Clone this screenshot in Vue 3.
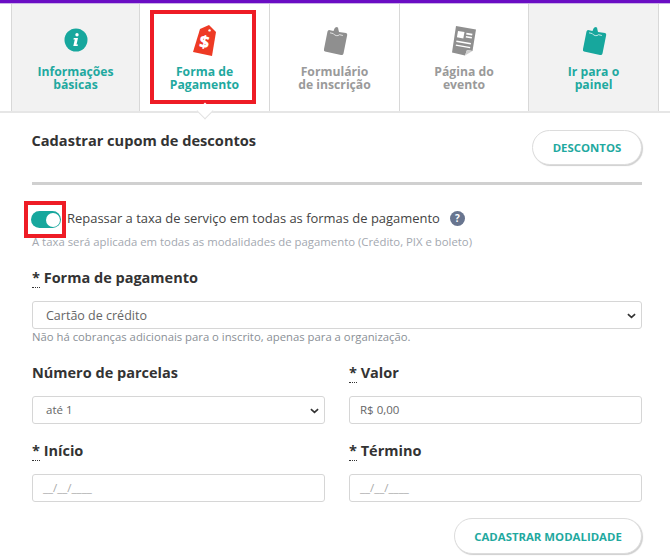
<script setup>
const tabs = [
  { id: 'info', lines: ['Informações', 'básicas'], tone: 'teal', bg: true },
  { id: 'tag', lines: ['Forma de', 'Pagamento'], tone: 'teal', marked: true },
  { id: 'clip', lines: ['Formulário', 'de inscrição'], tone: 'grey' },
  { id: 'page', lines: ['Página do', 'evento'], tone: 'grey' },
  { id: 'clip', lines: ['Ir para o', 'painel'], tone: 'teal', bg: true },
]
</script>

<template>
  <div class="page">
    <div class="topbar"></div>
    <nav class="tabs">
      <div v-for="(t, i) in tabs" :key="i" class="tab" :class="[t.tone, { shaded: t.bg, marked: t.marked }]">
        <svg class="icon" viewBox="0 0 34 34">
          <template v-if="t.id === 'info'">
            <circle cx="17" cy="17" r="11.5" fill="#17a79d" />
            <circle cx="18" cy="11.8" r="1.7" fill="#fff" />
            <path d="M14.8 15h4.2l-1.500 6.600h1.500l-.4 1.400h-4.300l1.500-6.600h-1.400z" fill="#fff" />
          </template>
          <template v-else-if="t.id === 'tag'">
            <path d="M21 2l7 7-4 24-19-4 7-23z" fill="#ee3a24" />
            <circle cx="21.500" cy="7.400" r="1.200" fill="#fff" />
            <text x="16.300" y="25" class="dollar" transform="rotate(10 16.300 20)">$</text>
          </template>
          <template v-else-if="t.id === 'clip'">
            <path d="M11 7l4.500 1 1-2.500L18 4l2 .5.500 2.500.5 2 7 1q1.500.3 1.200 2l-3.700 18.500q-.5 2-2.500 1.500l-16-3.500q-1.500-.5-1-2.500l3.500-17.500q.5-1.500 1.500-1.500z" fill="currentColor" />
            <path d="M12 9.800l3.300.8q1 1.600 2.900 2t3.400-.9l3.300.8" stroke="#fff" stroke-width=".9" fill="none" opacity=".8" />
          </template>
          <template v-else>
            <path d="M9 3l20 3.500L25.500 28l-5.500-1-2 5.500-13-3z" fill="#8f8f8f" />
            <path d="M11 8l6.500 1.100-1.200 6.300-6.400-1.100zM19.500 9.800l6 1-.4 1.700-6-1zM19 13l6 1-.3 1.500-6-1zM9.500 17.500l14.500 2.500-.3 1.500-14.500-2.500zM9 21.500l14.300 2.500-.3 1.300-14.300-2.500z" fill="#fff" />
            <path d="M20 27l5.500 1-7.500 4.500z" fill="#cfcfcf" />
          </template>
        </svg>
        <span class="tab-text">{{ t.lines[0] }}<br />{{ t.lines[1] }}</span>
      </div>
    </nav>
    <div class="rule"><span class="notch"></span></div>

    <main class="content">
      <header class="head">
        <h2>Cadastrar cupom de descontos</h2>
        <button class="pill discounts">DESCONTOS</button>
      </header>
      <hr class="divider" />

      <div class="toggle-row">
        <span class="toggle-wrap">
          <span class="switch"><span class="knob"></span></span>
        </span>
        <span class="toggle-label">Repassar a taxa de serviço em todas as formas de pagamento</span>
        <span class="help">?</span>
      </div>
      <p class="hint first">A taxa será aplicada em todas as modalidades de pagamento (Crédito, PIX e boleto)</p>

      <label class="label pay"><abbr>*</abbr> Forma de pagamento</label>
      <div class="field select wide">Cartão de crédito
        <svg class="chev" viewBox="0 0 10 6"><path d="M1 1l4 3.600L9 1" fill="none" stroke="#333" stroke-width="1.800" /></svg>
      </div>
      <p class="hint second">Não há cobranças adicionais para o inscrito, apenas para a organização.</p>

      <div class="grid">
        <div>
          <label class="label">Número de parcelas</label>
          <div class="field select">até 1
            <svg class="chev" viewBox="0 0 10 6"><path d="M1 1l4 3.600L9 1" fill="none" stroke="#333" stroke-width="1.800" /></svg>
          </div>
        </div>
        <div>
          <label class="label"><abbr>*</abbr> Valor</label>
          <div class="field">R$ 0,00</div>
        </div>
        <div>
          <label class="label"><abbr>*</abbr> Início</label>
          <div class="field mask">__/__/____</div>
        </div>
        <div>
          <label class="label"><abbr>*</abbr> Término</label>
          <div class="field mask">__/__/____</div>
        </div>
      </div>

      <div class="actions">
        <button class="pill register">CADASTRAR MODALIDADE</button>
      </div>
    </main>
  </div>
</template>

<style scoped>
.page {
  width: 670px;
  height: 557px;
  overflow: hidden;
  background: #fff;
  font-family: "Open Sans", sans-serif;
  color: #333;
  position: relative;
}
.topbar {
  height: 3px;
  background: #6a0dc4;
  border-bottom: 1px solid #c9b4e6;
}
.tabs {
  display: grid;
  grid-template-columns: 128px 130px 130px 129px 130px;
  margin-left: 11px;
  width: 648px;
  height: 107px;
  border-left: 1px solid #d8d8d8;
  box-sizing: border-box;
}
.tab {
  position: relative;
  border-right: 1px solid #d8d8d8;
  display: flex;
  flex-direction: column;
  align-items: center;
  padding-top: 19px;
  box-sizing: border-box;
}
.tab.shaded { background: #f2f2f2; }
.icon { width: 34px; height: 34px; display: block; }
.tab.grey .icon { color: #8f8f8f; }
.tab.teal .icon { color: #17a79d; }
.tab-text {
  margin-top: 8px;
  font-size: 12.200px;
  line-height: 13px;
  font-weight: 700;
  text-align: center;
}
.tab.teal .tab-text { color: #1fa9a0; }
.tab.grey .tab-text { color: #9a9a9a; }
.tab.marked::after {
  content: "";
  position: absolute;
  left: 10px;
  top: 6px;
  width: 106px;
  height: 94px;
  border: 4px solid #ee1c25;
  box-sizing: border-box;
}
.dollar {
  font-family: "Open Sans", sans-serif;
  font-weight: 800;
  font-size: 17px;
  fill: #fff;
  text-anchor: middle;
}
.rule {
  position: relative;
  height: 2px;
  background: #e6e6e6;
}
.notch {
  position: absolute;
  left: 199px;
  top: -6px;
  width: 11px;
  height: 11px;
  background: #fff;
  border-right: 1px solid #e2e2e2;
  border-bottom: 1px solid #e2e2e2;
  transform: rotate(45deg);
}
.content {
  padding: 17px 28px 0 32px;
  position: relative;
}
.head {
  display: flex;
  justify-content: space-between;
  align-items: flex-start;
  height: 52px;
}
h2 {
  margin: 0 0 0 -.5px;
  font-size: 14.600px;
  line-height: 20px;
  font-weight: 700;
  color: #333;
}
.pill {
  background: #fff;
  border: 1px solid #dcdcdc;
  box-shadow: 1px 1px 1px #cfcfcf;
  border-radius: 18px;
  color: #1fa9a0;
  font-family: inherit;
  font-weight: 700;
  font-size: 11.400px;
  padding: 0;
  height: 35px;
}
.discounts { width: 110px; }
.register { width: 188px; height: 36px; }
.divider {
  margin: 0;
  border: 0;
  height: 3px;
  background: #d0d0d0;
}
.toggle-row {
  display: flex;
  align-items: center;
  margin-top: 16px;
  height: 37px;
  position: relative;
  left: -8px;
}
.toggle-wrap {
  width: 42px;
  height: 37px;
  border: 4px solid #ee1c25;
  box-sizing: border-box;
  display: flex;
  align-items: center;
  justify-content: center;
}
.switch {
  width: 30px;
  height: 17px;
  margin-left: 1px;
  border-radius: 9px;
  background: #17a79d;
  display: flex;
  justify-content: flex-end;
  align-items: center;
  padding-right: 1px;
  box-sizing: border-box;
}
.knob {
  width: 14px;
  height: 14px;
  border-radius: 50%;
  background: #fff;
}
.toggle-label {
  margin-left: 1px;
  margin-bottom: 3px;
  font-size: 12.960px;
  color: #444;
}
.help {
  margin-left: 10px;
  margin-bottom: 3px;
  width: 15px;
  height: 15px;
  border-radius: 50%;
  background: #68758f;
  color: #fff;
  font-size: 10px;
  font-weight: 700;
  line-height: 15px;
  text-align: center;
}
.hint {
  margin: 0;
  font-size: 11.350px;
  line-height: 16px;
  color: #a3a8b0;
}
.hint.first { margin-top: -4px; }
.hint.second { color: #8a8f96; font-size: 11.300px; }
.label {
  display: block;
  font-size: 14.500px;
  line-height: 20px;
  font-weight: 700;
  color: #333;
}
.label.pay { margin-top: 18px; }
abbr {
  border-bottom: 1px dotted #333;
}
.field {
  position: relative;
  margin-top: 13px;
  height: 28px;
  border: 1px solid #d6d6d6;
  border-radius: 3px;
  box-sizing: border-box;
  padding-left: 13px;
  font-size: 11.500px;
  line-height: 26px;
  color: #666;
  background: #fff;
}
.field.wide { font-size: 12.500px; line-height: 27px; }
.mask { color: #aaa; padding-left: 10px; }
.grid .field:not(.select) { padding-left: 10px; }
.chev {
  position: absolute;
  right: 5px;
  top: 11px;
  width: 9px;
  height: 6px;
}
.grid {
  display: grid;
  grid-template-columns: 293px 293px;
  column-gap: 24px;
  row-gap: 17px;
  margin-top: 18px;
}
.actions {
  display: flex;
  justify-content: flex-end;
  margin-top: 16px;
}
</style>
